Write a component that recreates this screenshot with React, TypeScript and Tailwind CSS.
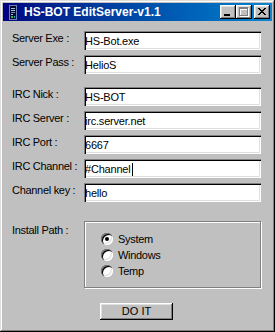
import React from "react";

const raised =
  "shadow-[inset_-1px_-1px_0_#000,inset_1px_1px_0_#fff,inset_-2px_-2px_0_#808080,inset_2px_2px_0_#dfdfdf]";

function Field({ value, caret }: { value: string; caret?: boolean }) {
  return (
    <div className="h-[19px] w-[177px] bg-white flex items-start pt-[4px] pl-[1px] leading-[13px] tracking-[-0.2px] shadow-[inset_1px_1px_0_#808080,inset_2px_2px_0_#000,inset_-1px_-1px_0_#fff,inset_-2px_-2px_0_#dfdfdf]">
      <span>{value}</span>
      {caret && <span className="inline-block w-[1px] h-[13px] bg-black ml-[1px]" />}
    </div>
  );
}

function Row({ label, value, caret }: { label: string; value: string; caret?: boolean }) {
  return (
    <div className="flex items-start h-[19px]">
      <span className="w-[72px] leading-[13px] mt-[1px] tracking-[-0.3px] whitespace-nowrap">{label}</span>
      <Field value={value} caret={caret} />
    </div>
  );
}

function Radio({ label, checked }: { label: string; checked?: boolean }) {
  return (
    <div className="flex items-center h-[16px] gap-[5px]">
      <div className="relative w-[12px] h-[12px] rounded-full bg-white shadow-[inset_1px_1px_0_#808080,inset_2px_2px_0_#000,inset_-1px_-1px_0_#fff,inset_-2px_-2px_0_#dfdfdf]">
        {checked && (
          <div className="absolute left-[4px] top-[4px] w-[4px] h-[4px] rounded-full bg-black" />
        )}
      </div>
      <span className="leading-[13px] tracking-[-0.3px]">{label}</span>
    </div>
  );
}

export default function App() {
  return (
    <div className="w-[275px] h-[332px] bg-[#c0c0c0] p-[3px] flex flex-col text-black text-[11px] font-['Liberation_Sans',Arial,sans-serif] shadow-[inset_-1px_-1px_0_#000,inset_1px_1px_0_#dfdfdf,inset_-2px_-2px_0_#808080,inset_2px_2px_0_#fff]">
      {/* Title bar */}
      <div className="h-[18px] flex items-center bg-linear-to-r from-[#000080] to-[#1084d0]">
        <svg width="16" height="16" viewBox="0 0 16 16" className="ml-[2px] shrink-0" shapeRendering="crispEdges">
          <rect x="4" y="1" width="8" height="15" fill="#7080b8" />
          <rect x="5" y="2" width="6" height="13" fill="#0a0a30" />
          <rect x="6" y="4" width="4" height="1" fill="#a0c0e0" />
          <rect x="6" y="6" width="4" height="1" fill="#a0c0e0" />
          <rect x="6" y="8" width="4" height="1" fill="#6090c0" />
          <rect x="6" y="10" width="2" height="1" fill="#a0c0e0" />
          <rect x="6" y="12" width="2" height="2" fill="#20c040" />
          <rect x="9" y="12" width="1" height="2" fill="#40a0c0" />
        </svg>
        <span className="ml-[3px] text-white font-bold text-[12px] leading-[14px] whitespace-nowrap">
          HS-BOT EditServer-v1.1
        </span>
        <div className="ml-auto mr-[2px] flex items-center">
          <div className={`w-[16px] h-[14px] bg-[#c0c0c0] ${raised}`}>
            <svg width="16" height="14" viewBox="0 0 16 14" shapeRendering="crispEdges">
              <rect x="4" y="9" width="6" height="2" fill="#000" />
            </svg>
          </div>
          <div className={`w-[16px] h-[14px] bg-[#c0c0c0] ${raised}`}>
            <svg width="16" height="14" viewBox="0 0 16 14" shapeRendering="crispEdges">
              <g fill="#fff">
                <rect x="4" y="3" width="9" height="2" />
                <rect x="4" y="3" width="1" height="9" />
                <rect x="12" y="3" width="1" height="9" />
                <rect x="4" y="11" width="9" height="1" />
              </g>
              <g fill="#808080">
                <rect x="3" y="2" width="9" height="2" />
                <rect x="3" y="2" width="1" height="9" />
                <rect x="11" y="2" width="1" height="9" />
                <rect x="3" y="10" width="9" height="1" />
              </g>
            </svg>
          </div>
          <div className={`ml-[2px] w-[16px] h-[14px] bg-[#c0c0c0] ${raised}`}>
            <svg width="16" height="14" viewBox="0 0 16 14" shapeRendering="crispEdges">
              <g fill="#000">
                <rect x="4" y="3" width="2" height="1" />
                <rect x="10" y="3" width="2" height="1" />
                <rect x="5" y="4" width="2" height="1" />
                <rect x="9" y="4" width="2" height="1" />
                <rect x="6" y="5" width="4" height="1" />
                <rect x="7" y="6" width="2" height="1" />
                <rect x="6" y="7" width="4" height="1" />
                <rect x="5" y="8" width="2" height="1" />
                <rect x="9" y="8" width="2" height="1" />
                <rect x="4" y="9" width="2" height="1" />
                <rect x="10" y="9" width="2" height="1" />
              </g>
            </svg>
          </div>
        </div>
      </div>

      {/* Body */}
      <div className="flex flex-col pl-[9px] pt-[10px]">
        <div className="flex flex-col gap-[5px]">
          <Row label="Server Exe :" value="HS-Bot.exe" />
          <Row label="Server Pass :" value="HelioS" />
        </div>
        <div className="flex flex-col gap-[5px] mt-[13px]">
          <Row label="IRC Nick :" value="HS-BOT" />
          <Row label="IRC Server :" value="irc.server.net" />
          <Row label="IRC Port :" value="6667" />
          <Row label="IRC Channel :" value="#Channel" caret />
          <Row label="Channel key :" value="hello" />
        </div>

        <div className="flex items-start mt-[19px]">
          <span className="w-[72px] leading-[13px] mt-[3px] tracking-[-0.3px] whitespace-nowrap">Install Path :</span>
          <div className="w-[177px] h-[67px] border border-[#808080] shadow-[1px_1px_0_#fff,inset_1px_1px_0_#fff] pt-[9px] pl-[16px] flex flex-col">
            <Radio label="System" checked />
            <Radio label="Windows" />
            <Radio label="Temp" />
          </div>
        </div>

        <div className="flex mt-[15px]">
          <div className={`ml-[88px] w-[73px] h-[17px] flex items-center justify-center leading-[13px] ${raised}`}>
            DO IT
          </div>
        </div>
      </div>
    </div>
  );
}
